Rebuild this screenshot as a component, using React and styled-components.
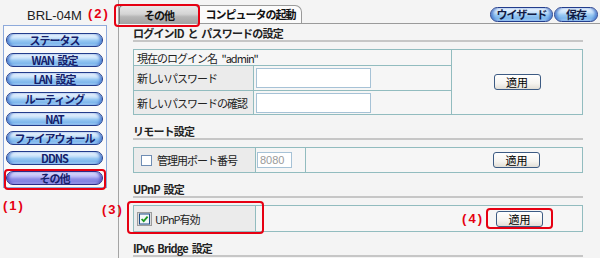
import React from 'react';
import styled, { createGlobalStyle, css } from 'styled-components';

const JP = `"Noto Sans CJK JP", "Noto Sans", sans-serif`;

const GlobalStyle = createGlobalStyle`
  *, *::before, *::after { box-sizing: border-box; }
  html, body { margin: 0; padding: 0; background: #f4f4f4; }
  body {
    width: 600px;
    height: 258px;
    overflow: hidden;
    font-family: ${JP};
    font-size: 11px;
    color: #222;
  }
`;

// red annotation frame drawn over an element
const ring = css`
  ${p => p.$ring && css`
    position: relative;
    &::after {
      content: '';
      position: absolute;
      inset: ${p.$ring};
      border: 2px solid #e60012;
      border-radius: 4px;
      pointer-events: none;
      z-index: 1;
    }
  `}
`;

const pill = css`
  border: 1px solid #233d8c;
  border-radius: 8px;
  background: linear-gradient(to bottom, #f4f9ff 0%, #c8e2fa 35%, #97c8f2 55%, #7fb7ec 78%, #acd4f8 100%);
  box-shadow: inset 3px 0 3px -1px #4f80d2, inset -3px 0 3px -1px #4f80d2;
  font-family: ${JP};
  font-weight: bold;
  font-size: 11px;
  letter-spacing: -1px;
  padding: 0;
  cursor: pointer;
`;

const Page = styled.div`
  display: flex;
  width: 600px;
  height: 258px;
  background: #f4f4f4;
`;

const Side = styled.aside`
  width: 119px;
  flex: none;
  border-right: 1px solid #a4a4a4;
  padding-top: 9px;
`;

const Model = styled.div`
  padding-left: 27px;
  font: 13px/14px "Liberation Sans", Arial, sans-serif;
  color: #222;
`;

const Menu = styled.nav`
  margin: 2px 0 0 3px;
  width: 104px;
  border: 1px solid #8eaadb;
  background: #fafafa;
  padding: 7px 3px 2px 2px;
  display: flex;
  flex-direction: column;
  gap: 5.7px;
`;

const MenuButton = styled.button`
  ${pill}
  display: block;
  width: 100%;
  height: 14px;
  line-height: 12px;
  color: #15206a;
  word-spacing: 2px;
  ${p => p.$active && css`
    border-color: #2c2c88;
    background: linear-gradient(to bottom, #e6e6ff 0%, #b8b8f6 38%, #8e8ee6 58%, #8282e0 78%, #a8a8f0 100%);
    box-shadow: inset 3px 0 3px -1px #5a5ac6, inset -3px 0 3px -1px #5a5ac6;
  `}
  ${ring}
`;

const Note = styled.span`
  font: bold 13px/15px "Liberation Sans", Arial, sans-serif;
  color: #e60012;
  letter-spacing: 2px;
  white-space: nowrap;
`;

const SideNote = styled(Note)`
  display: block;
  margin: 10px 0 0 3px;
`;

const FloatNote = styled(Note)`
  position: absolute;
  left: ${p => p.$x}px;
  top: ${p => p.$y}px;
`;

const Main = styled.main`
  flex: 1;
  min-width: 0;
  display: flex;
  flex-direction: column;
`;

const TabBar = styled.div`
  height: 24px;
  display: flex;
  align-items: flex-end;
  border-bottom: 1px solid #9a9a9a;
`;

const Tab = styled.div`
  position: relative;
  width: ${p => p.$w}px;
  height: ${p => (p.$active ? 19 : 18)}px;
  margin-bottom: ${p => (p.$active ? -1 : 0)}px;
  display: flex;
  align-items: center;
  justify-content: center;
  font: bold 11px/1 ${JP};
  letter-spacing: -1px;
  color: #111;
  border: 1px solid ${p => (p.$active ? '#777' : '#9a9a9a')};
  border-left-color: ${p => (p.$active ? '#777' : 'transparent')};
  border-bottom: none;
  border-radius: ${p => (p.$active ? '4px 4px 0 0' : '0 7px 0 0')};
  background: ${p => (p.$active
    ? 'linear-gradient(to bottom, #e8e8e8 0%, #d4d4d4 45%, #b6b6b6 60%, #a2a2a2 100%)'
    : '#fbfbfb')};
  ${ring}
`;

const Tools = styled.div`
  margin-left: auto;
  margin-right: 2px;
  display: flex;
  gap: 1px;
  padding-bottom: 1px;
`;

const ToolButton = styled.button`
  ${pill}
  width: ${p => p.$w}px;
  height: 15px;
  line-height: 13px;
  color: #111a44;
`;

const Panel = styled.div`
  padding: 3px 17px 0 14px;
`;

const Section = styled.section`
  & + & { margin-top: 10px; }
`;

const SectionTitle = styled.h3`
  margin: 0;
  font: bold 11px/12px ${JP};
  letter-spacing: -0.8px;
  word-spacing: 2px;
  color: #222;
  padding-bottom: 1px;
  border-bottom: 2px solid #c6c6c6;
`;

const Grid = styled.div`
  margin-top: 7px;
  display: grid;
  grid-template-columns: ${p => p.$cols};
  grid-template-rows: ${p => p.$rows};
  gap: 1px;
  border: 1px solid #92bcbf;
  background: #92bcbf;
`;

const Cell = styled.div`
  position: relative;
  display: flex;
  align-items: center;
  justify-content: ${p => p.$justify || 'flex-start'};
  padding: 0 ${p => p.$pr || 0}px 0 ${p => p.$pl || 0}px;
  grid-column: ${p => p.$col || 'auto'};
  grid-row: ${p => p.$row || 'auto'};
  background: ${p => (p.$label ? '#ebebeb' : '#f6f6f6')};
  font-size: 11px;
  letter-spacing: -1px;
  word-spacing: 3px;
  color: #222;
  white-space: pre;
  ${ring}
`;

const TextInput = styled.input`
  width: ${p => p.$w}px;
  height: ${p => p.$h}px;
  border: 1px solid #a6c2d6;
  background: #fff;
  padding: 0 2px;
  font: 11px "Liberation Sans", Arial, sans-serif;
  letter-spacing: 0;
  color: ${p => (p.disabled ? '#9a9a9a' : '#222')};
  outline: none;
`;

const ApplyButton = styled.button`
  width: 47px;
  height: 16px;
  padding: 0;
  border: 1px solid #3d5b83;
  border-radius: 3px;
  background: linear-gradient(to bottom, #ffffff 0%, #f6f4f0 60%, #e2ded6 100%);
  font: 11px/12px ${JP};
  color: #000;
  ${ring}
`;

const Box = styled.span`
  display: inline-block;
  width: 11px;
  height: 11px;
  border: 1px solid #6f8db4;
  background: #fff;
  margin-right: 5px;
  flex: none;
`;

const CheckedBox = () => (
  <svg width="15" height="14" viewBox="0 0 15 14" style={{ flex: 'none', marginRight: 3 }}>
    <rect x="0.5" y="0.5" width="14" height="13" fill="#dcdcdc" stroke="#9c9c9c" />
    <rect x="2.5" y="2" width="10" height="10" fill="#f4f7fb" stroke="#1f4f86" />
    <path d="M4.6 7 L6.7 9.2 L10.6 4.6" fill="none" stroke="#1d9a22" strokeWidth="1.8" />
  </svg>
);

const menuItems = ['ステータス', 'WAN 設定', 'LAN 設定', 'ルーティング', 'NAT', 'ファイアウォール', 'DDNS', 'その他'];

export default function App() {
  return (
    <>
      <GlobalStyle />
      <Page>
        <Side>
          <Model>BRL-04M</Model>
          <Menu>
            {menuItems.map((label, i) => {
              const last = i === menuItems.length - 1;
              return (
                <MenuButton key={label} $active={last} $ring={last ? '-3px -4px -6px -3px' : undefined}>
                  {label}
                </MenuButton>
              );
            })}
          </Menu>
          <SideNote>(1)</SideNote>
        </Side>

        <Main>
          <TabBar>
            <Tab $active $w={80} $ring="-2px -2px -3px -6px">
              <FloatNote $x={-32} $y={0}>(2)</FloatNote>
              その他
            </Tab>
            <Tab $w={103}>コンピュータの起動</Tab>
            <Tools>
              <ToolButton $w={63}>ウイザード</ToolButton>
              <ToolButton $w={44}>保存</ToolButton>
            </Tools>
          </TabBar>

          <Panel>
            <Section>
              <SectionTitle>ログインID と パスワードの設定</SectionTitle>
              <Grid $cols="119px 197px 1fr" $rows="15px 24px 23px">
                <Cell $col="1 / span 2" $pl={3}>現在のログイン名 "admin"</Cell>
                <Cell $col="3" $row="1 / span 3" $justify="center">
                  <ApplyButton>適用</ApplyButton>
                </Cell>
                <Cell $label $pl={3}>新しいパスワード</Cell>
                <Cell $pl={2}><TextInput type="password" $w={115} $h={20} /></Cell>
                <Cell $label $pl={3}>新しいパスワードの確認</Cell>
                <Cell $pl={2}><TextInput type="password" $w={115} $h={20} /></Cell>
              </Grid>
            </Section>

            <Section>
              <SectionTitle>リモート設定</SectionTitle>
              <Grid $cols="121px 49px 1fr" $rows="24px">
                <Cell $label $pl={7}><Box />管理用ポート番号</Cell>
                <Cell $pl={1}><TextInput $w={35} $h={16} defaultValue="8080" disabled /></Cell>
                <Cell $justify="flex-end" $pr={42}><ApplyButton>適用</ApplyButton></Cell>
              </Grid>
            </Section>

            <Section>
              <SectionTitle>UPnP 設定</SectionTitle>
              <Grid $cols="121px 1fr" $rows="25px">
                <Cell $label $pl={3} $ring="-5px -9px -3px -7px">
                  <FloatNote $x={-32} $y={-4}>(3)</FloatNote>
                  <CheckedBox />UPnP有効
                </Cell>
                <Cell $justify="flex-end" $pr={39}>
                  <Note style={{ marginRight: 12 }}>(4)</Note>
                  <ApplyButton $ring="-4px -11px -3px -11px">適用</ApplyButton>
                </Cell>
              </Grid>
            </Section>

            <Section>
              <SectionTitle>IPv6 Bridge 設定</SectionTitle>
            </Section>
          </Panel>
        </Main>
      </Page>
    </>
  );
}
